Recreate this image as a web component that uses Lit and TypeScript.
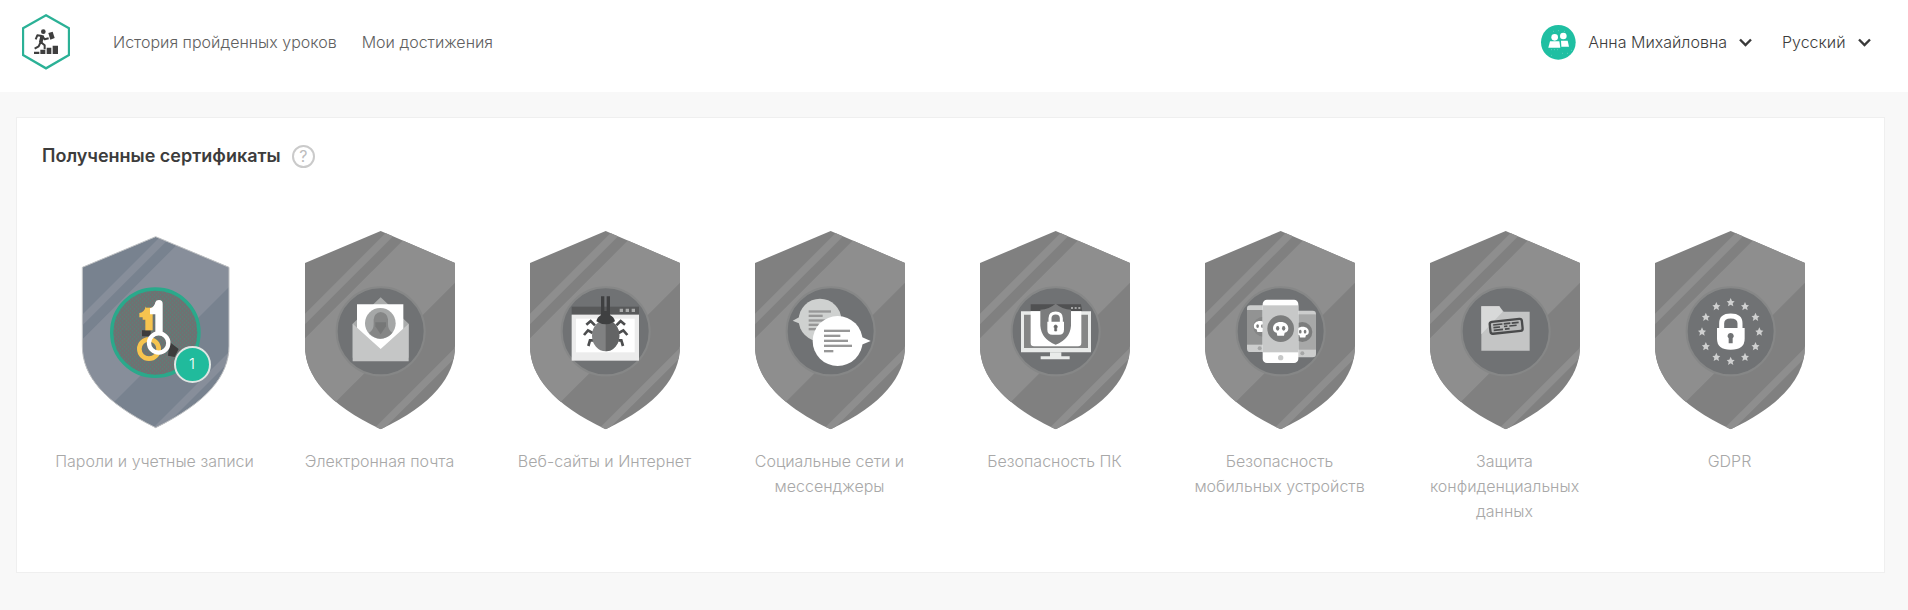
import { LitElement, html, svg, css, SVGTemplateResult } from "lit";
import { customElement, property } from "lit/decorators.js";

type IconName = "keys" | "mail" | "bug" | "chat" | "desktop" | "phones" | "folder" | "gdpr";

interface Certificate {
  title: string;
  icon: IconName;
  count?: number;
}

const CERTIFICATES: Certificate[] = [
  { title: "Пароли и учетные записи", icon: "keys", count: 1 },
  { title: "Электронная почта", icon: "mail" },
  { title: "Веб-сайты и Интернет", icon: "bug" },
  { title: "Социальные сети и мессенджеры", icon: "chat" },
  { title: "Безопасность ПК", icon: "desktop" },
  { title: "Безопасность мобильных\u00a0устройств", icon: "phones" },
  { title: "Защита конфиденциальных данных", icon: "folder" },
  { title: "GDPR", icon: "gdpr" },
];

const skull = (x: number, y: number, s: number, eye: string) => svg`
  <g transform="translate(${x} ${y}) scale(${s})">
    <path fill="#fff" d="M0-20C14-20 23-12 23-1C23 7 19 11 12 12L10 21H-10L-12 12C-19 11-23 7-23-1C-23-12-14-20 0-20Z"/>
    <ellipse cx="-9" cy="-1" rx="5" ry="7" fill=${eye} />
    <ellipse cx="9" cy="-1" rx="5" ry="7" fill=${eye} />
  </g>`;

const star = (i: number) => {
  const a = (i * Math.PI) / 6;
  const x = 257 + 86 * Math.sin(a);
  const y = 322 - 88 * Math.cos(a);
  return svg`<path fill="#cfd0d0" transform="translate(${x} ${y})"
    d="M0-13L4-4L12-3L6 3L8 12L0 7L-8 12L-6 3L-12-3L-4-4Z"/>`;
};

const bar = (x: number, y: number, w: number) =>
  svg`<rect x=${x} y=${y} width=${w} height="7" fill="#979797"/>`;

const ICONS: Record<IconName, () => SVGTemplateResult> = {
  keys: () => svg`
    <path d="M216 318H242V336H216ZM298 352L326 374L314 398L294 394Z" fill="#3c3c3c"/>
    <g fill="none" stroke="#f6c44f">
      <circle cx="237" cy="374" r="29" stroke-width="14"/>
      <path d="M237 250V318" stroke-width="22"/>
    </g>
    <path d="M228 246V286H218V279H208V266Q222 266 228 246Z" fill="#f6c44f"/>
    <path d="M240 270V252Q254 248 256 234Q258 227 267 227Q278 227 278 238V328H256V270Z" fill="#fff"/>
    <circle cx="266" cy="356" r="29" fill="none" stroke="#fff" stroke-width="13"/>`,
  mail: () => svg`
    <path d="M173 298L257 219L341 298V400H173Z" fill="#a9abab"/>
    <path d="M186 240H325V320L257 376L186 320Z" fill="#fff"/>
    <circle cx="256" cy="297" r="46" fill="#a5a7a7"/>
    <path d="M222 325Q236 318 236 300V285Q238 265 257 263Q277 265 279 285V300Q279 318 292 325Q278 342 256 343Q235 342 222 325Z" fill="#858686"/>
    <path d="M241 294H273V306L257 330L241 306Z" fill="#767777"/>
    <path d="M173 298L257 374L341 298V411H173Z" fill="#c5c6c6"/>`,
  bug: () => svg`
    <rect x="155" y="247" width="202" height="24" fill="#58595a"/>
    <path d="M299 253h10v10h-10zM317 253h10v10h-10zM335 253h10v10h-10z" fill="#a9aaaa"/>
    <rect x="155" y="271" width="202" height="138" fill="#ececec"/>
    <rect x="168" y="283" width="176" height="101" fill="#fff"/>
    <g fill="none" stroke="#4c4d4e" stroke-width="8">
      <path d="M225 303L212 290L199 301M218 326L204 318L192 332M219 348H210L205 365"/>
      <path d="M289 303L302 290L315 301M296 326L310 318L322 332M295 348H304L309 365"/>
    </g>
    <ellipse cx="257" cy="334" rx="41" ry="47" fill="#808182"/>
    <path d="M257 287A41 47 0 0 1 257 381Z" fill="#636465"/>
    <path d="M229 291Q232 278 243 272V216H253V260H260V216H270V272Q282 278 285 291Q257 309 229 291Z" fill="#3f4041"/>`,
  chat: () => svg`
    <circle cx="225" cy="287" r="64" fill="#cfd1d0"/>
    <path d="M165 277L143 289L165 298Z" fill="#cfd1d0"/>
    ${bar(191, 258, 67)}${bar(191, 271, 42)}${bar(191, 285, 50)}${bar(191, 298, 30)}${bar(191, 311, 22)}
    <circle cx="278" cy="350" r="75" fill="#fff"/>
    <path d="M350 338L377 350L350 361Z" fill="#fff"/>
    ${bar(237, 316, 78)}${bar(237, 331, 49)}${bar(237, 346, 72)}${bar(237, 361, 84)}${bar(237, 377, 28)}`,
  desktop: () => svg`
    <path d="M182 240H333L337 262H182Z" fill="#505152"/>
    <path d="M303 248h6v6h-6zM314 248h6v6h-6zM325 248h6v6h-6z" fill="#a5a6a6"/>
    <path d="M153 261H363V384H153Z" fill="#e9ebea"/>
    <path d="M162 271H354V371H162Z" fill="#858686"/>
    <path d="M182 261H334V356Q334 366 324 366H192Q182 366 182 356Z" fill="#fff"/>
    <path d="M240 384H274V396H299V405H212V396H240Z" fill="#e9ebea"/>
    <path d="M257 238Q276 254 303 256V304Q300 344 257 361Q214 344 211 304V256Q238 254 257 238Z" fill="#7b7c7d"/>
    <path d="M240 294V282Q240 266 257 266Q274 266 274 282V294" fill="none" stroke="#fff" stroke-width="9"/>
    <path d="M232 292H282V316Q282 331 267 331H247Q232 331 232 316Z" fill="#fff"/>
    <path d="M257 302A5 5 0 0 1 260 311V320H254V311A5 5 0 0 1 257 302Z" fill="#666" stroke="#666" stroke-width="2"/>`,
  phones: () => svg`
    <rect x="156" y="243" width="80" height="140" rx="10" fill="#cccdcd"/>
    <rect x="156" y="257" width="80" height="104" fill="#929393"/>
    <circle cx="205" cy="307" r="30" fill="#858686"/>
    ${skull(195, 306, 0.8, "#7c7d7d")}
    <circle cx="194" cy="372" r="6" fill="#a5a6a6"/>
    <rect x="282" y="259" width="81" height="140" rx="10" fill="#cccdcd"/>
    <rect x="282" y="270" width="81" height="106" fill="#a7a8a8"/>
    <circle cx="322" cy="323" r="30" fill="#7c7d7d"/>
    ${skull(323, 323, 0.8, "#7c7d7d")}
    <circle cx="322" cy="387" r="6" fill="#a5a6a6"/>
    <rect x="203" y="226" width="107" height="190" rx="13" fill="#fff"/>
    <rect x="203" y="243" width="107" height="141" fill="#c7c8c8"/>
    <circle cx="257" cy="313" r="40" fill="#7c7d7d"/>
    ${skull(257, 313, 1, "#7c7d7d")}
    <circle cx="257" cy="400" r="8" fill="#c7c8c8"/>`,
  folder: () => svg`
    <path d="M184 246H238L251 262H329V379H184Z" fill="#c4c5c5"/>
    <path d="M184 246H238L248 262L184 330Z" fill="#d8d9d9"/>
    <g transform="rotate(-6 258 306)">
      <rect x="210" y="288" width="97" height="36" rx="7" fill="#b9baba" stroke="#4a4b4c" stroke-width="7"/>
      <path d="M220 298H248M252 298H272M276 298H297M220 306H240M252 306H262M268 306H290M220 314H248M254 314H268" stroke="#4a4b4c" stroke-width="5"/>
    </g>`,
  gdpr: () => svg`
    ${Array.from({ length: 12 }, (_, i) => star(i))}
    <path d="M230 314V297Q230 275 257 275Q285 275 285 297V314" fill="none" stroke="#fff" stroke-width="15"/>
    <path d="M216 311H299V343Q299 376 257 376Q216 376 216 343Z" fill="#fff"/>
    <path d="M257 326A9 9 0 0 1 263 342V357H251V342A9 9 0 0 1 257 326Z" fill="#707274"/>`,
};

@customElement("certificate-shield")
class CertificateShield extends LitElement {
  @property() icon: IconName = "keys";
  @property({ type: Number }) count = 0;

  static styles = css`
    :host { display: block; position: relative; width: 150px; }
    .picture { display: block; width: 100%; height: auto; }
    .badge {
      position: absolute; left: 94px; top: 115px; box-sizing: border-box;
      width: 37px; height: 37px; border: 2px solid #dfe6e3; border-radius: 50%;
      background: #20bb9c; color: #fff;
      font: 300 15px/32px Inter, "Liberation Sans", sans-serif; text-align: center;
    }
  `;

  render() {
    const earned = this.count > 0;
    const base = earned ? "#78828f" : "#808080";
    const light = earned ? "#878e9a" : "#8e8e8e";
    const shape = earned
      ? "M257 37L477 129V365C477 455 410 535 257 610C104 535 37 455 37 365V129Z"
      : "M257 20L480 116V365C480 455 415 540 257 615C99 540 30 455 30 365V116Z";
    return html`
      <svg class="picture" viewBox="30 20 450 597" aria-hidden="true">
        <defs>
          <clipPath id="shape"><path d=${shape} /></clipPath>
          <pattern id="dots" width="12" height="12" patternUnits="userSpaceOnUse">
            <rect width="12" height="12" fill="#6f7172" />
            <path d="M0 0h3v3h-3zM6 6h3v3h-3z" fill="#4c8c7d" />
          </pattern>
        </defs>
        <g clip-path="url(#shape)">
          <rect width="510" height="630" fill=${base} />
          <g fill=${light} transform=${earned ? "translate(10 0)" : "translate(0 0)"}>
            <path d="M0 298L298 0H330L0 330ZM0 372L372 0H655L0 655ZM220 630L630 220V250L250 630Z" />
          </g>
        </g>
        ${earned ? svg`<path d=${shape} fill="none" stroke="#bfc1c3" stroke-width="3" />` : ""}
        ${earned
          ? svg`<circle cx="256" cy="325" r="131" fill="url(#dots)" stroke="#2aa98b" stroke-width="10" />`
          : svg`<circle cx="257" cy="321" r="132" fill="#707274" stroke="#868787" stroke-width="6" />`}
        ${ICONS[this.icon]()}
      </svg>
      ${earned ? html`<span class="badge">${this.count}</span>` : ""}
    `;
  }
}

@customElement("app-root")
class AppRoot extends LitElement {
  static styles = css`
    :host {
      display: flow-root; box-sizing: border-box; min-height: 100vh;
      background: #f8f8f8; color: #3c3c3c;
      font: 300 16px/25px Inter, "Liberation Sans", sans-serif;
    }
    .header {
      display: flex; align-items: center; box-sizing: border-box; height: 92px;
      padding: 0 37px 8px 22px; background: #fff;
    }
    .logo { display: block; margin-right: 43px; }
    .logo svg { display: block; }
    .nav { display: flex; gap: 25px; flex: 1; }
    .nav a { color: #606060; text-decoration: none; }
    .account { display: flex; align-items: center; gap: 30px; }
    .user, .language { display: flex; align-items: center; gap: 12px; }
    .user, .language select {
      margin: 0; padding: 0; border: 0; background: none; color: inherit; font: inherit;
    }
    .user { cursor: pointer; }
    .language select { appearance: none; }
    .chevron { display: block; }
    .card {
      margin: 25px 23px 32px 16px; padding: 24px 25px 48px;
      border: 1px solid #efefef; background: #fff;
    }
    .heading { display: flex; align-items: center; gap: 11px; }
    h1 { margin: 0; font-size: 18px; font-weight: 600; line-height: 28px; }
    .help {
      box-sizing: border-box; width: 23px; height: 23px; padding: 0; border: 2px solid #cacaca;
      border-radius: 50%; background: none; color: #bdbdbd; font: 400 16px/19px Inter, sans-serif;
      text-align: center;
    }
    .list { display: flex; flex-wrap: wrap; margin: 61px 0 0; padding: 0; list-style: none; }
    .item {
      display: flex; flex-direction: column; align-items: center; gap: 19px;
      box-sizing: border-box; width: 225px; padding: 0 10px; text-align: center; color: #a8a8a8;
    }
  `;

  private chevron() {
    return html`<svg class="chevron" width="13" height="9" viewBox="0 0 13 9" aria-hidden="true">
      <path d="M1 1.5L6.500 7L12 1.500" fill="none" stroke="#3a3a3a" stroke-width="2.4" />
    </svg>`;
  }

  private logo() {
    return html`<svg width="48" height="56" viewBox="0 0 144 168" aria-hidden="true">
      <path d="M72 4L141 43V123L72 163L3 123V43Z" fill="none" stroke="#2bb196" stroke-width="7" />
      <g fill="#3e3e3e">
        <circle cx="64" cy="53" r="7" />
        <path d="M79 57L92 53L98 72L85 77Z" />
        <path d="M36 113H52V120H36ZM55 107H70V120H55ZM74 101H88V120H74ZM92 95H108V120H92Z" />
      </g>
      <path d="M60 64L56 84L68 94V106M56 84L50 97L38 104M60 66L46 64L41 76M61 66L68 76L80 73"
        fill="none" stroke="#3e3e3e" stroke-width="6" stroke-linejoin="round" />
      <path d="M61 64L56 86" stroke="#3e3e3e" stroke-width="11" />
    </svg>`;
  }

  private avatar() {
    return html`<svg width="35" height="35" viewBox="0 0 105 105" aria-hidden="true">
      <circle cx="52" cy="52" r="52" fill="#1fbfa2" />
      <g fill="#fff">
        <circle cx="41" cy="37" r="10" />
        <circle cx="67" cy="33" r="10" />
        <path d="M27 49H55L58 68H22Z" />
        <path d="M60 47H80L84 65H61Z" />
      </g>
      <path d="M36 19h2M51 17h2M70 19h2M31 74h2M40 74h2M48 74h2M63 85h2M79 85h2M90 76h2M30 91h2"
        stroke="#a6e6da" stroke-width="2" />
    </svg>`;
  }

  render() {
    return html`
      <header class="header">
        <a class="logo" href="#" aria-label="Главная">${this.logo()}</a>
        <nav class="nav">
          <a href="#history">История пройденных уроков</a>
          <a href="#achievements">Мои достижения</a>
        </nav>
        <div class="account">
          <button class="user" type="button">
            ${this.avatar()}<span>Анна Михайловна</span>${this.chevron()}
          </button>
          <label class="language">
            <select aria-label="Язык"><option>Русский</option></select>
            ${this.chevron()}
          </label>
        </div>
      </header>
      <main class="card">
        <div class="heading">
          <h1>Полученные сертификаты</h1>
          <button class="help" type="button" aria-label="Справка">?</button>
        </div>
        <ul class="list">
          ${CERTIFICATES.map(
            (c) => html`<li class="item">
              <certificate-shield .icon=${c.icon} .count=${c.count ?? 0}></certificate-shield>
              <span>${c.title}</span>
            </li>`
          )}
        </ul>
      </main>
    `;
  }
}
